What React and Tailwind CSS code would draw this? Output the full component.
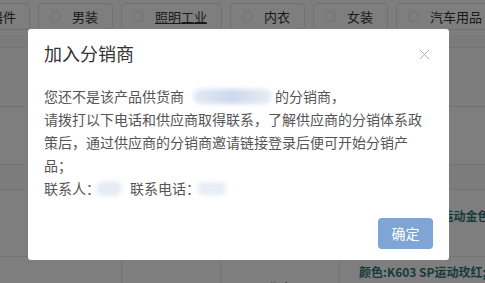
import { X } from 'lucide-react';

const tabs = ['男装', '照明工业', '内衣', '女装', '汽车用品', '家居'];

const App = () => {
  return (
    <div className="relative w-[485px] h-[283px] overflow-hidden bg-[#fdfdfd] font-['Microsoft_YaHei','Noto_Sans_CJK_SC',sans-serif]">
      {/* Page behind the dialog */}
      <div className="flex items-center h-[35px] gap-[8px] pt-[3px] pb-[5px] ml-[-40px] whitespace-nowrap">
        <div className="h-[27px] w-[70px] shrink-0 flex items-center justify-end pr-[13px] border border-[#e0e0e0] rounded-sm text-[13px] text-[#333]">
          器件
        </div>
        {tabs.map(t => (
          <div key={t} className="h-[27px] shrink-0 flex items-center pl-[11px] pr-[14px] border border-[#e0e0e0] rounded-sm text-[13px] text-[#333]">
            <span className="w-[11px] h-[11px] rounded-full border border-[#e3e3e3] mr-[11px]" />
            <span className={t === '照明工业' ? 'underline' : ''}>{t}</span>
          </div>
        ))}
      </div>

      <div className="flex flex-col text-[13px]">
        <div className="h-[13px] bg-[#f6f6f6] border-b border-[#e6e6e6]" />
        <div className="h-[59px] bg-[#fafafa] border-b border-[#e6e6e6]" />
        <div className="h-[58px] border-b border-[#e6e6e6]" />
        <div className="h-[25px] bg-[#f8f8f8] border-b border-[#e6e6e6]" />
        <div className="h-[67px] flex border-b border-[#e6e6e6]">
          <div className="w-[122px] shrink-0 border-r border-[#e6e6e6]" />
          <div className="w-[99px] shrink-0 border-r border-[#e6e6e6]" />
          <div className="w-[119px] shrink-0 border-r border-[#e6e6e6]" />
          <div className="flex-1 pl-[26px] pt-[17px] text-[12px] font-bold text-[#2f7676] whitespace-nowrap">颜色:K603 SP运动金色;</div>
        </div>
        <div className="h-[40px] flex">
          <div className="w-[122px] shrink-0 border-r border-[#e6e6e6]" />
          <div className="w-[99px] shrink-0 border-r border-[#e6e6e6]" />
          <div className="w-[119px] shrink-0 border-r border-[#e6e6e6] flex justify-center pt-[21px] text-[#333]">北京</div>
          <div className="flex-1 pl-[19px] pt-[6px] text-[12px] font-bold text-[#2f7676] whitespace-nowrap">颜色:K603 SP运动玫红;</div>
        </div>
      </div>

      {/* Overlay */}
      <div className="absolute inset-0 bg-black/50" />

      {/* Dialog */}
      <div className="absolute left-[28px] top-[29px] w-[421px] h-[231px] bg-white rounded-[3px] flex flex-col px-[16px] pt-[12px] pb-[11px]">
        <div className="flex items-center justify-between h-[24px]">
          <h2 className="text-[18px] leading-[24px] text-[#333]">加入分销商</h2>
          <X size={17} strokeWidth={1.3} className="text-[#98adc4] mt-[2px]" />
        </div>

        <div className="mt-[20px] text-[14px] leading-[23px] text-[#555] whitespace-nowrap">
          <div className="flex items-center">
            <span>您还不是该产品供货商</span>
            <span className="ml-[9px] w-[79px] h-[15px] rounded-full bg-gradient-to-r from-[#e4eaf4] via-[#ccd8ec] to-[#e9eef6] blur-[2px]" />
            <span className="ml-[3px]">的分销商，</span>
          </div>
          <div>请拨打以下电话和供应商取得联系，了解供应商的分销体系政</div>
          <div>策后，通过供应商的分销商邀请链接登录后便可开始分销产</div>
          <div>品；</div>
          <div className="flex items-center">
            <span>联系人：</span>
            <span className="ml-[-4px] w-[26px] h-[15px] rounded-full bg-[#e6ebf4] blur-[2px]" />
            <span className="ml-[8px]">联系电话：</span>
            <span className="ml-[-2px] w-[28px] h-[13px] rounded-sm bg-[#e8edf5] blur-[2px]" />
          </div>
        </div>

        <div className="mt-auto flex justify-end">
          <button className="w-[55px] h-[31px] rounded-[4px] bg-[#7ea5d6] text-white text-[14px]">
            确定
          </button>
        </div>
      </div>
    </div>
  );
};

export default App;
